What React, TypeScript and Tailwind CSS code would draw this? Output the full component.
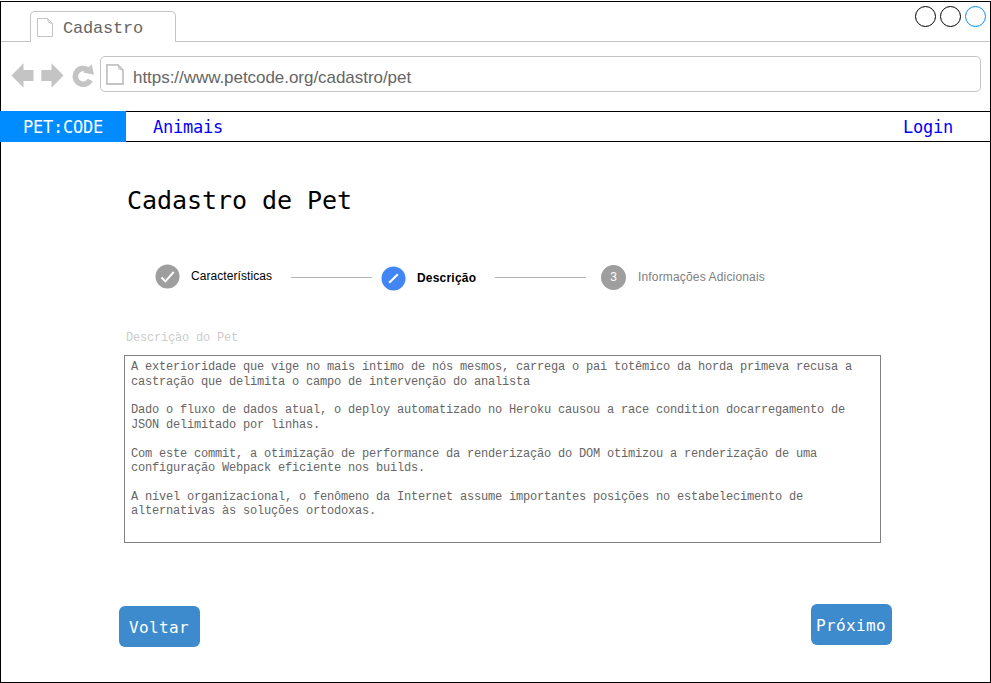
import React from 'react';

const sans = "font-['Liberation_Sans',Arial,sans-serif]";
const mono = "font-['Liberation_Mono','Courier_New',monospace]";
const dejavu = "font-['DejaVu_Sans_Mono',monospace]";

function TabStrip() {
  return (
    <div className="flex h-10">
      <div className="w-[29px] border-b border-[#c4c4c4]" />
      <div className="mt-[9px] flex w-[146px] rounded-t-[5px] border-x border-t border-[#c4c4c4] pl-[6px]">
        <svg className="mt-[6px] h-[19px] w-4" viewBox="0 0 16 19" fill="none" stroke="#c4c4c4">
          <path d="M0.5 0.5H10.5L15.5 5.5V18.5H0.5Z" />
          <path d="M10.5 0.5L11.5 4.5L15.5 5.5" />
        </svg>
        <span className={`${mono} ml-[10px] mt-[7px] text-[17px] leading-5 tracking-[-0.2px] text-[#666666]`}>Cadastro</span>
      </div>
      <div className="flex flex-1 justify-end gap-1 border-b border-[#c4c4c4] pr-1 pt-1">
        <div className="size-[21px] rounded-full border border-black" />
        <div className="size-[21px] rounded-full border border-black" />
        <div className="size-[21px] rounded-full border border-[#008cff]" />
      </div>
    </div>
  );
}

function AddressBar() {
  return (
    <div className="flex h-[69px] pt-[14px]">
      <svg className="mt-[6px] h-[26px] w-[99px]" viewBox="1 62 99 26" fill="#c4c4c4">
        <path d="M11.5 75.5 23.5 63.2V70H33.5V81H23.5V87.8Z" />
        <path d="M63.5 75.5 51.5 63.2V70H41.3V81H51.5V87.8Z" />
        <path d="M88 70A7.9 7.9 0 1 0 90.3 80" fill="none" stroke="#c4c4c4" strokeWidth="5.6" />
        <path d="M91.7 64.2 94 74.8 83.3 72.6Z" />
      </svg>
      <div className="flex h-9 w-[881px] rounded-[5px] border border-[#c4c4c4] pl-[5px]">
        <svg className="mt-[7px] h-[21px] w-[18px]" viewBox="0 0 18 21" fill="none" stroke="#c4c4c4" strokeWidth="1.8">
          <path d="M0.9 0.9H12L17 6V20H0.9Z" />
          <path d="M12 0.9L13 5L17 6" strokeWidth="1.2" />
        </svg>
        <span className={`${sans} ml-[9px] mt-[11px] text-[17px] leading-5 tracking-[-0.045px] text-[#666666]`}>https://www.petcode.org/cadastro/pet</span>
      </div>
    </div>
  );
}

function NavBar() {
  return (
    <nav className={`${dejavu} -ml-px flex h-[31px] text-[17px] tracking-[-0.235px]`}>
      <div className="w-[126px] bg-[#008cff] pl-[23px] leading-[33px] text-white">PET:CODE</div>
      <div className="flex flex-1 justify-between border-y border-black pl-[27px] pr-[37px] leading-[31px] text-[#0000ff]">
        <a>Animais</a>
        <a>Login</a>
      </div>
    </nav>
  );
}

function Stepper() {
  return (
    <div className={`${sans} ml-[154px] mt-[46px] flex h-[30px] text-[12px] leading-4`}>
      <svg className="mt-[2px] size-[25px]" viewBox="0 0 25 25">
        <circle cx="12.5" cy="12.5" r="12" fill="#9e9e9e" />
        <path d="M6.5 13.6 10.4 17.3 18.8 7.9" fill="none" stroke="white" strokeWidth="2" />
      </svg>
      <span className="ml-[11px] mt-[6px] w-[100px] tracking-[0.07px] text-black">Características</span>
      <div className="mt-[15px] h-px w-[81px] bg-[#b3b3b3]" />
      <svg className="ml-[9px] mt-1 size-[25px]" viewBox="0 0 25 25">
        <circle cx="12.5" cy="12.5" r="12" fill="#4285f4" />
        <path d="M8.2 16.8 16.8 8.3" fill="none" stroke="white" strokeWidth="2.1" />
      </svg>
      <span className="ml-[11px] mt-2 w-[78px] font-bold tracking-[0.2px] text-black">Descrição</span>
      <div className="mt-[15px] h-px w-[91px] bg-[#b3b3b3]" />
      <div className="ml-[15px] mt-[3px] size-[25px] rounded-full bg-[#9e9e9e] text-center leading-[25px] text-white">3</div>
      <span className="ml-[12px] mt-[7px] whitespace-nowrap tracking-[0.16px] text-[#808080]">Informações Adicionais</span>
    </div>
  );
}

function Description() {
  return (
    <div className={`${mono} ml-[123px] mt-[39px] text-[12px] tracking-[-0.201px]`}>
      <div className="h-[24px] pl-[2px] leading-[14px] text-[#cccccc]">Descriçào do Pet</div>
      <div className="h-[188px] w-[757px] whitespace-nowrap border border-[#808080] pl-[6px] pt-[4.2px] leading-[14.4px] text-[#666666]">
        <p>
          A exterioridade que vige no mais íntimo de nós mesmos, carrega o pai totêmico da horda primeva recusa a
          <br />
          castração que delimita o campo de intervenção do analista
        </p>
        <p className="mt-[14.4px]">
          Dado o fluxo de dados atual, o deploy automatizado no Heroku causou a race condition docarregamento de
          <br />
          JSON delimitado por linhas.
        </p>
        <p className="mt-[14.4px]">
          Com este commit, a otimização de performance da renderização do DOM otimizou a renderização de uma
          <br />
          configuração Webpack eficiente nos builds.
        </p>
        <p className="mt-[14.4px]">
          A nível organizacional, o fenômeno da Internet assume importantes posições no estabelecimento de
          <br />
          alternativas às soluções ortodoxas.
        </p>
      </div>
    </div>
  );
}

function Actions() {
  return (
    <div className={`${dejavu} ml-[118px] mt-[61px] flex w-[773px] justify-between text-[16px] leading-[43px] tracking-[0.367px] text-white`}>
      <button className="mt-[2px] h-[41px] w-[81px] rounded-[6px] bg-[#3d8bcd] pl-[10px] text-left">
        <span className="block h-[41px]">Voltar</span>
      </button>
      <button className="h-[41px] w-[81px] rounded-[6px] bg-[#3d8bcd] pl-[5px] text-left">
        <span className="block h-[41px]">Próximo</span>
      </button>
    </div>
  );
}

export default function App() {
  return (
    <div className="h-[683px] w-[991px] bg-white pt-px">
      <div className="h-[682px] border border-black">
        <TabStrip />
        <AddressBar />
        <NavBar />
        <h1 className={`${dejavu} ml-[126px] mt-[44px] text-[25px] leading-[30px] tracking-[-0.05px] text-black`}>Cadastro de Pet</h1>
        <Stepper />
        <Description />
        <Actions />
      </div>
    </div>
  );
}
